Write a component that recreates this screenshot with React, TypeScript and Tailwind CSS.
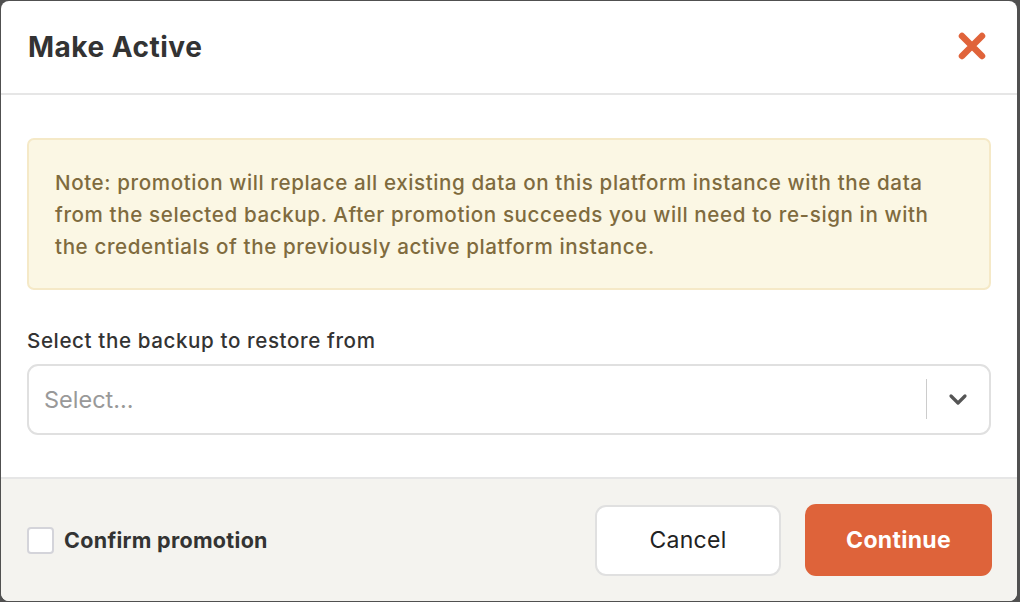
import { useState } from "react";

const font = { fontFamily: "Inter, 'Noto Sans', sans-serif" };

function CloseIcon() {
  return (
    <svg width="30" height="30" viewBox="0 0 30 30" fill="none">
      <path d="M5 5 L25 25 M25 5 L5 25" stroke="#E0633A" strokeWidth="6.5" strokeLinecap="round" />
    </svg>
  );
}

function Chevron() {
  return (
    <svg width="22" height="22" viewBox="0 0 22 22" fill="none">
      <path d="M4 8 L11 15 L18 8" stroke="#555" strokeWidth="3.2" strokeLinecap="round" strokeLinejoin="round" />
    </svg>
  );
}

export default function App() {
  const [confirmed, setConfirmed] = useState(false);

  return (
    <div className="w-[1020px] h-[602px] bg-[#505050] pt-px pl-px pr-[3px] overflow-hidden" style={font}>
      <div className="h-[600px] bg-white rounded-[8px] overflow-hidden flex flex-col">
        <div className="h-[94px] flex items-center justify-between pl-[27px] pr-[30px] border-b-2 border-[#e6e6e6]">
          <h1 className="text-[28px] font-bold text-[#333] tracking-[0.5px]">Make Active</h1>
          <button className="mt-[-2px]">
            <CloseIcon />
          </button>
        </div>

        <div className="flex-1 px-[26px] pt-[43px]">
          <div className="bg-[#FBF7E4] border-2 border-[#F5E9C7] rounded-[7px] pl-[26px] pr-[40px] pt-[27px] pb-[25px]">
            <p className="text-[20.6px] leading-[32px] font-medium text-[#7F6B3E] tracking-[0.6px]">
              Note: promotion will replace all existing data on this platform instance with the data from the selected
              backup. After promotion succeeds you will need to re-sign in with the credentials of the previously active
              platform instance.
            </p>
          </div>

          <label className="block mt-[36px] text-[20.6px] font-medium text-[#333] tracking-[0.6px]">
            Select the backup to restore from
          </label>
          <div className="mt-[7px] h-[71px] border-2 border-[#e0e0e0] rounded-[11px] flex items-center">
            <span className="flex-1 pl-[15px] text-[23.5px] text-[#999]">Select...</span>
            <div className="w-px h-[40px] bg-[#ccc]" />
            <div className="w-[62px] flex items-center justify-center">
              <Chevron />
            </div>
          </div>
        </div>

        <div className="h-[124px] bg-[#F4F3EF] border-t-2 border-[#e6e6e6] flex items-center justify-between pl-[26px] pr-[25px]">
          <label className="flex items-center gap-[10px] cursor-pointer">
            <input
              type="checkbox"
              checked={confirmed}
              onChange={() => setConfirmed(!confirmed)}
              className="appearance-none w-[27px] h-[27px] bg-white border-2 border-[#d4d4da] rounded-[4px]"
            />
            <span className="text-[21.5px] font-bold text-[#333] tracking-[0.3px]">Confirm promotion</span>
          </label>
          <div className="flex items-center gap-[24px]">
            <button className="w-[186px] h-[71px] bg-white border-2 border-[#e0e0e0] rounded-[11px] text-[23px] text-[#222] tracking-[0.3px]">
              Cancel
            </button>
            <button className="w-[187px] h-[72px] bg-[#DE633A] rounded-[11px] text-[23px] font-bold text-white tracking-[0.3px]">
              Continue
            </button>
          </div>
        </div>
      </div>
    </div>
  );
}
